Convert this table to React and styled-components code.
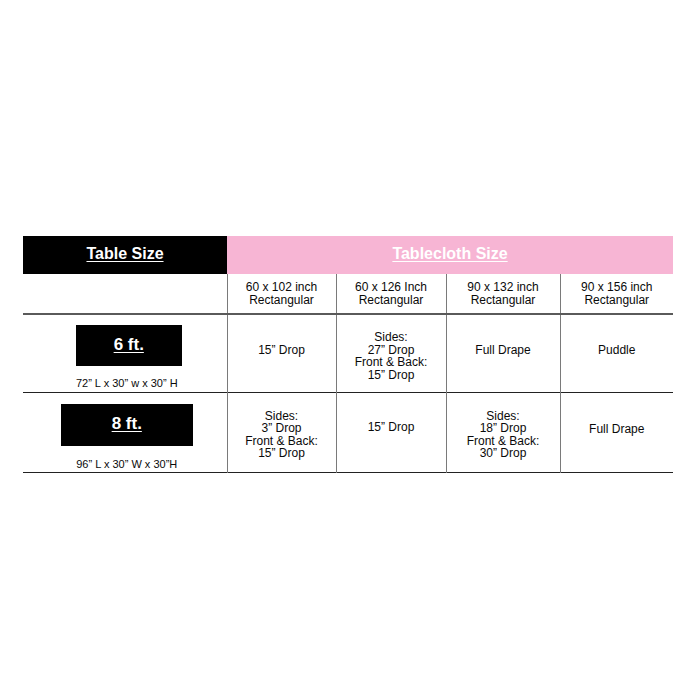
import React from "react";
import styled, { createGlobalStyle } from "styled-components";

const Global = createGlobalStyle`
  html, body { margin: 0; padding: 0; background: #fff; }
  body { font-family: "Liberation Sans", Arial, sans-serif; color: #0a0a0a; }
`;

const Page = styled.div`
  width: 700px;
  height: 700px;
  padding: 236px 0 0 23px;
  box-sizing: border-box;
`;

const Table = styled.table`
  width: 650px;
  border-collapse: collapse;
  table-layout: fixed;
`;

const HeadCell = styled.th`
  height: 38px;
  box-sizing: border-box;
  padding: 0 0 2px;
  background: ${(p) => (p.$pink ? "#f7b5d4" : "#000")};
  color: #fff;
  font-size: 16px;
  font-weight: 700;
  text-align: center;
  vertical-align: middle;
  text-decoration: underline;
  text-underline-offset: 2px;
  text-decoration-thickness: 1px;
`;

const Row = styled.tr`
  border-bottom: ${(p) => p.$line};
`;

const Cell = styled.td`
  height: ${(p) => p.$h}px;
  padding: ${(p) => p.$pt || 0}px 0 ${(p) => p.$pb || 0}px;
  box-sizing: border-box;
  border-left: ${(p) => (p.$first ? "none" : "1px solid #7a7a7a")};
  text-align: center;
  vertical-align: middle;
  font-size: 12px;
  line-height: ${(p) => (p.$tight ? 12.5 : 13)}px;
`;

const SizeCell = styled.td`
  height: ${(p) => p.$h}px;
  box-sizing: border-box;
  padding: 0 0 0 4px;
  text-align: center;
  vertical-align: top;
`;

const SizeBox = styled.div`
  width: ${(p) => p.$w}px;
  height: ${(p) => p.$bh}px;
  margin: ${(p) => p.$mt}px auto 0;
  position: relative;
  left: ${(p) => p.$dx || 0}px;
  background: #000;
  color: #fff;
  font-size: 17px;
  font-weight: 700;
  display: flex;
  align-items: center;
  justify-content: center;
  text-decoration: underline;
  text-underline-offset: 2px;
  text-decoration-thickness: 1px;
  padding-bottom: 2px;
  box-sizing: border-box;
`;

const Dim = styled.div`
  margin-top: ${(p) => p.$mt}px;
  font-size: 11px;
  line-height: 12px;
`;

const Lines = ({ items }) =>
  items.map((t, i) => (
    <React.Fragment key={i}>
      {i > 0 && <br />}
      {t}
    </React.Fragment>
  ));

export default function App() {
  return (
    <>
      <Global />
      <Page>
        <Table>
          <colgroup>
            <col style={{ width: 204 }} />
            <col style={{ width: 109 }} />
            <col style={{ width: 110 }} />
            <col style={{ width: 114 }} />
            <col style={{ width: 113 }} />
          </colgroup>
          <thead>
            <tr>
              <HeadCell>Table Size</HeadCell>
              <HeadCell $pink colSpan={4}>
                Tablecloth Size
              </HeadCell>
            </tr>
          </thead>
          <tbody>
            <Row $line="2px solid #5a5a5a">
              <Cell $first $h={40} />
              <Cell $h={40}><Lines items={["60 x 102 inch", "Rectangular"]} /></Cell>
              <Cell $h={40}><Lines items={["60 x 126 Inch", "Rectangular"]} /></Cell>
              <Cell $h={40}><Lines items={["90 x 132 inch", "Rectangular"]} /></Cell>
              <Cell $h={40}><Lines items={["90 x 156 inch", "Rectangular"]} /></Cell>
            </Row>
            <Row $line="1.5px solid #222">
              <SizeCell $h={78}>
                <SizeBox $w={106} $bh={41} $mt={10} $dx={2}>6 ft.</SizeBox>
                <Dim $mt={11}>72” L x 30” w x 30” H</Dim>
              </SizeCell>
              <Cell $h={78} $pb={6}>15” Drop</Cell>
              <Cell $h={78} $pt={6} $tight><Lines items={["Sides:", "27” Drop", "Front & Back:", "15” Drop"]} /></Cell>
              <Cell $h={78} $pb={6}>Full Drape</Cell>
              <Cell $h={78} $pb={5}>Puddle</Cell>
            </Row>
            <Row $line="1.5px solid #222">
              <SizeCell $h={80}>
                <SizeBox $w={132} $bh={42} $mt={11}>8 ft.</SizeBox>
                <Dim $mt={12}>96” L x 30” W x 30”H</Dim>
              </SizeCell>
              <Cell $h={80} $pt={5} $tight><Lines items={["Sides:", "3” Drop", "Front & Back:", "15” Drop"]} /></Cell>
              <Cell $h={80} $pb={9}>15” Drop</Cell>
              <Cell $h={80} $pt={5} $tight><Lines items={["Sides:", "18” Drop", "Front & Back:", "30” Drop"]} /></Cell>
              <Cell $h={80} $pb={6}>Full Drape</Cell>
            </Row>
          </tbody>
        </Table>
      </Page>
    </>
  );
}
